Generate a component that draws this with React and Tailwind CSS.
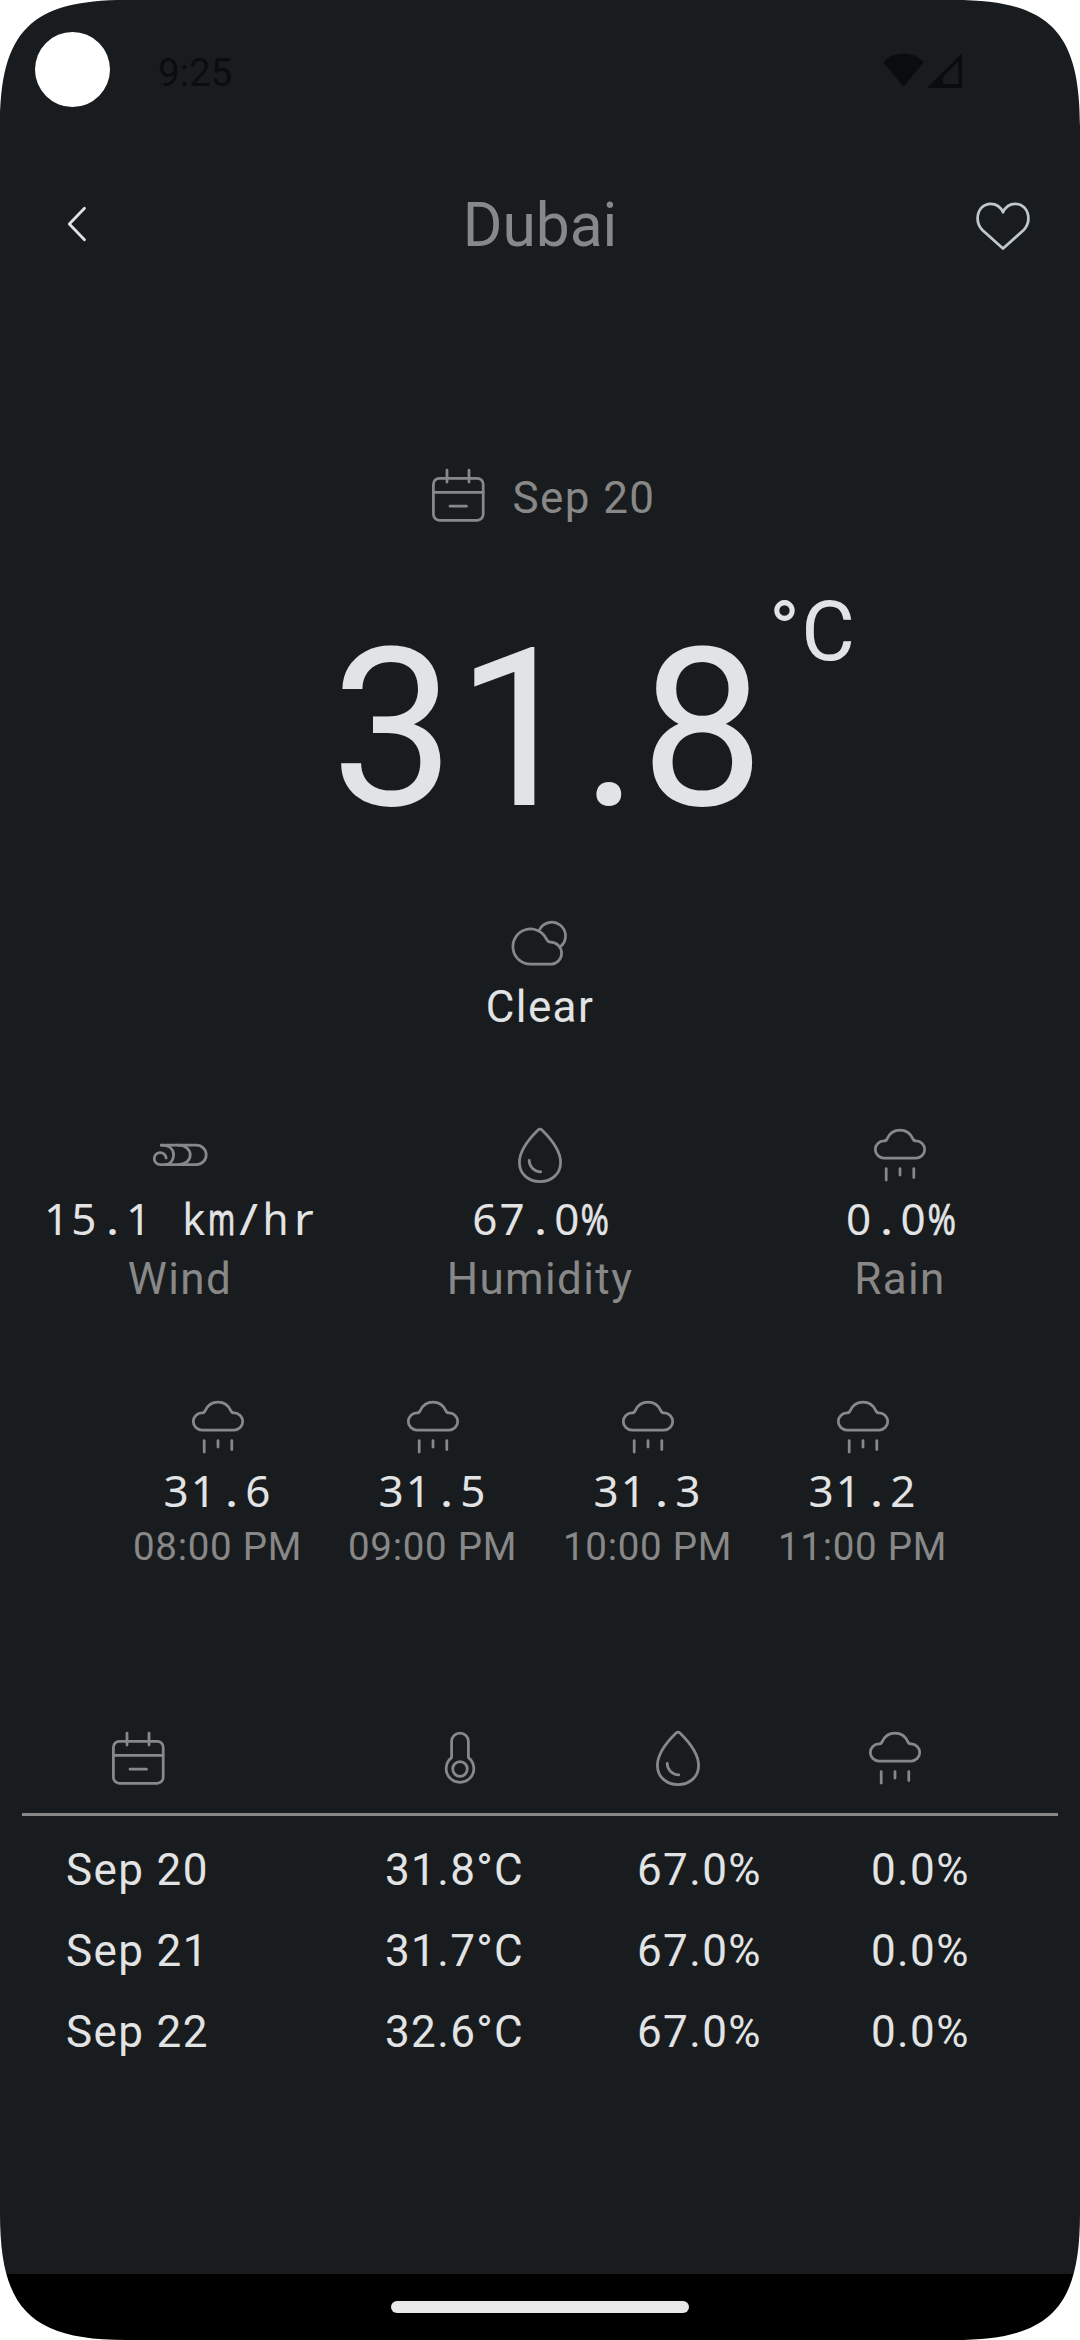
import React from "react";

function Icon({ children, className = "" }) {
  return (
    <svg
      viewBox="0 0 66 66"
      className={`block h-[66px] w-[66px] shrink-0 ${className}`}
      fill="none"
      stroke="currentColor"
      strokeWidth="2.75"
      strokeLinecap="round"
      strokeLinejoin="round"
    >
      {children}
    </svg>
  );
}

const CalendarIcon = (props) => (
  <Icon {...props}>
    <rect x="8.4" y="16.3" width="49.8" height="42" rx="6" />
    <path d="M8.4 30.3H58.2M22 8V20M44 8V20M25 44.2H41.5" />
  </Icon>
);

const CloudIcon = (props) => (
  <Icon {...props}>
    <path d="M23.2 54.2A17.6 17.6 0 1 1 39.3 28.8C40.3 31.1 41.3 32.2 43.6 32.2A11 11 0 0 1 43.6 54.2Z" />
    <path d="M32.3 20A13.8 13.8 0 1 1 53.8 36.4" />
  </Icon>
);

const WindIcon = (props) => (
  <Icon {...props}>
    <path d="M14.3 23.2H49.2A10 9.7 0 0 1 49.2 42.6H13.5A6 6 0 1 1 19.2 36" />
    <path d="M14.3 23.2C22 23.2 26.6 27 26.6 33C26.6 38.5 23 42.4 18.5 42.6" />
    <path d="M31 23.2C38.5 23.2 43.2 27.4 43.2 33C43.2 38.5 38.5 42.6 31 42.6" />
  </Icon>
);

const DropIcon = (props) => (
  <Icon {...props}>
    <path d="M30.8 8.2C32.2 6.9 33.8 6.9 35.2 8.2C42 14.9 53.6 28 53.6 40.5C53.6 52.1 44.3 59.6 33 59.6C21.7 59.6 12.4 52.1 12.4 40.5C12.4 28 24 14.9 30.8 8.2Z" />
    <path d="M22.2 38.3C22.2 44.8 27.3 49.8 33.8 49.8" />
  </Icon>
);

const RainIcon = (props) => (
  <Icon {...props}>
    <path d="M16.9 36.1A8.6 8.6 0 0 1 16.9 18.9C18.7 18.9 19.3 18.5 20.1 16.8C22.6 11.4 27.3 8.2 33 8.2C38.7 8.2 43.4 11.4 45.9 16.8C46.7 18.5 47.3 18.9 49.1 18.9A8.6 8.6 0 0 1 49.1 36.1Z" />
    <path d="M19.2 46.5V58M33 46.5V53M46.8 46.5V55.5" />
  </Icon>
);

const ThermometerIcon = (props) => (
  <Icon {...props}>
    <path d="M24.6 32.6V16.5A8.4 8.4 0 0 1 41.4 16.5V32.6A13.8 13.8 0 1 1 24.6 32.6Z" />
    <circle cx="33" cy="44" r="7.3" />
  </Icon>
);

const HeartIcon = (props) => (
  <Icon {...props}>
    <path d="M33 19.2C30.6 14 26.2 10.8 20.8 10.8C13.2 10.8 7.6 16.8 7.6 25.6C7.6 30.4 9.2 33.9 12.3 36.9L33 55.6L53.7 36.9C56.8 33.9 58.4 30.4 58.4 25.6C58.4 16.8 52.8 10.8 45.2 10.8C39.8 10.8 35.4 14 33 19.2Z" />
  </Icon>
);

const SQUEEZE = {
  m: "scale-x-[0.66] [-webkit-text-stroke:0.9px_currentColor]",
  "%": "scale-x-[0.78] [-webkit-text-stroke:0.6px_currentColor]",
  h: "scale-x-[0.96]",
  k: "scale-x-[0.98]",
  r: "scale-x-[1.1]",
  "/": "scale-x-[1.15]",
  ".": "scale-x-[1.15]",
};

function Mono({ children }) {
  return (
    <div className="flex h-[60px] justify-center whitespace-pre pl-px font-['Noto_Sans'] text-[44px] leading-[60px] text-[#e2e3e5]">
      {children.match(/\d+|\D/g).map((run, i) =>
        /\d/.test(run) ? (
          <span key={i} className="tracking-[2.1px]">
            {run}
          </span>
        ) : (
          <span key={i} className={`flex w-[27.3px] justify-center tracking-normal ${SQUEEZE[run] || ""}`}>
            {run}
          </span>
        )
      )}
    </div>
  );
}

function Corner({ className }) {
  return (
    <svg viewBox="0 0 126 126" className={`absolute h-[126px] w-[126px] ${className}`}>
      <path d="M0 0H126C31 0 0 31 0 126Z" fill="#fff" />
    </svg>
  );
}

const stats = [
  { Glyph: WindIcon, value: "15.1 km/hr", label: "Wind" },
  { Glyph: DropIcon, value: "67.0%", label: "Humidity" },
  { Glyph: RainIcon, value: "0.0%", label: "Rain" },
];

const hours = [
  ["31.6", "08:00 PM"],
  ["31.5", "09:00 PM"],
  ["31.3", "10:00 PM"],
  ["31.2", "11:00 PM"],
];

const days = [
  ["Sep 20", "31.8°C", "67.0%", "0.0%"],
  ["Sep 21", "31.7°C", "67.0%", "0.0%"],
  ["Sep 22", "32.6°C", "67.0%", "0.0%"],
];

export default function App() {
  return (
    <div className="relative flex h-[2340px] w-[1080px] flex-col overflow-hidden bg-[#191c1e] font-[Roboto,sans-serif] text-[44px] tracking-[1.375px] text-[#888888]">
      <div className="flex h-[140px] items-center pr-[118px] pl-[35px] text-[#0b0c0e]">
        <div className="-mt-px h-[75px] w-[75px] rounded-full bg-white" />
        <div className="ml-[48px] pt-[6px] text-[38.5px] leading-[50px] tracking-normal">9:25</div>
        <svg viewBox="0 0 80 36" className="ml-auto h-[36px] w-[80px]" fill="currentColor">
          <path d="M1 10C12.500 -1.300 30.500 -1.300 42 10L21.500 35Z" />
          <path fillRule="evenodd" d="M80 1V36H45ZM76.500 9.500L61 25V32H76.500Z" />
        </svg>
      </div>

      <div className="flex h-[172px] items-center justify-between pr-[44px] pl-[44px]">
        <Icon className="-mt-[4px] text-[#e2e3e5]">
          <path d="M40.500 17.200L25.300 33L40.500 48.800" />
        </Icon>
        <div className="text-[60.5px] leading-[80px] tracking-normal">Dubai</div>
        <HeartIcon className="text-[#c0c7cd]" />
      </div>

      <div className="mt-[150px] flex h-[66px] items-center justify-center gap-[22px]">
        <CalendarIcon />
        <div className="pt-[5px] leading-[66px]">Sep 20</div>
      </div>

      <div className="mt-[64px] flex h-[268px] pl-[331px] text-[#e2e3e5]">
        <div className="mt-[8px] w-[438px] text-[220px] leading-[260px]">31.8</div>
        <div className="text-[82.5px] leading-[80px]">°C</div>
      </div>

      <div className="mt-[50px] flex flex-col items-center">
        <CloudIcon />
        <div className="-mt-[2px] leading-[66px] text-[#e2e3e5]">Clear</div>
      </div>

      <div className="mt-[82px] grid grid-cols-3">
        {stats.map(({ Glyph, value, label }) => (
          <div key={label} className="flex flex-col items-center">
            <Glyph />
            <Mono>{value}</Mono>
            <div className="mt-px leading-[60px]">{label}</div>
          </div>
        ))}
      </div>

      <div className="mt-[85px] grid grid-cols-[repeat(4,215px)] justify-center">
        {hours.map(([temp, time]) => (
          <div key={time} className="flex flex-col items-center">
            <RainIcon />
            <Mono>{temp}</Mono>
            <div className="mt-px text-[38.5px] leading-[52px] tracking-[0.7px]">{time}</div>
          </div>
        ))}
      </div>

      <div className="mx-[22px] mt-[152px] flex flex-col">
        <div className="grid grid-cols-[319px_252px_234px_1fr] border-b-[3px] border-[#888888] pb-[22px] pl-[43px]">
          <CalendarIcon className="ml-[40px]" />
          <ThermometerIcon className="ml-[43px]" />
          <DropIcon className="ml-[9px]" />
          <RainIcon className="-ml-[8px]" />
        </div>
        <div className="mt-[14px] flex flex-col text-[#e2e3e5]">
          {days.map((day) => (
            <div key={day[0]} className="grid grid-cols-[319px_252px_234px_1fr] pl-[44px] leading-[81px]">
              {day.map((cell, i) => (
                <div key={i}>{cell}</div>
              ))}
            </div>
          ))}
        </div>
      </div>

      <div className="mt-auto flex h-[66px] justify-center bg-black pt-[27px]">
        <div className="h-[12px] w-[298px] rounded-full bg-[#e8e8e8]" />
      </div>

      <Corner className="top-0 left-0" />
      <Corner className="top-0 right-0 -scale-x-100" />
      <Corner className="bottom-0 left-0 -scale-y-100" />
      <Corner className="right-0 bottom-0 rotate-180" />
    </div>
  );
}
